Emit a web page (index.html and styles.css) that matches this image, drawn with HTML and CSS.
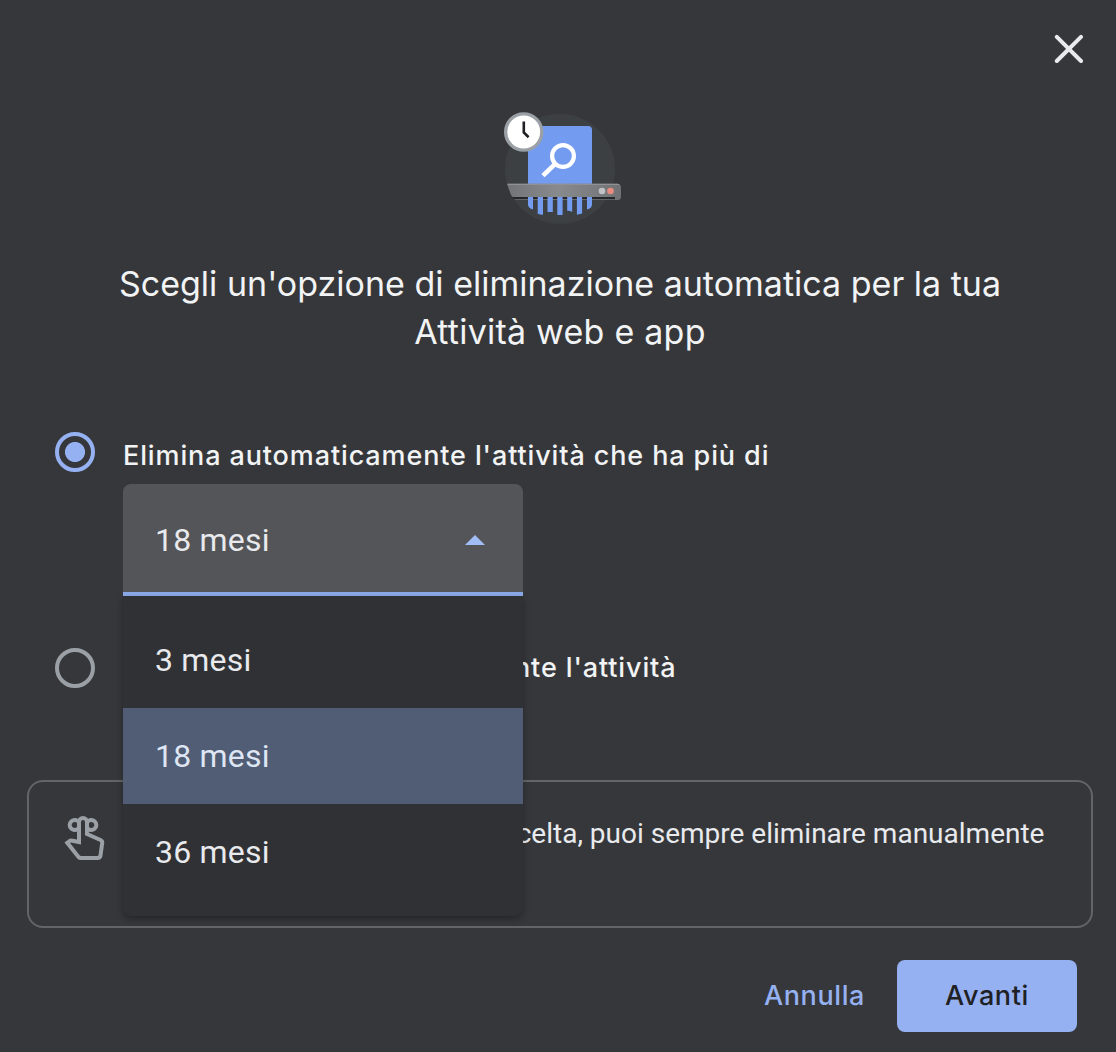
FILE: index.html
```html
<!DOCTYPE html>
<html lang="it">
<head>
<meta charset="utf-8">
<title>Eliminazione automatica</title>
<link rel="stylesheet" href="styles.css">
</head>
<body>
<main class="dialog">
  <header class="topbar">
    <button class="close" aria-label="Chiudi">
      <svg width="30" height="30" viewBox="0 0 30 30"><path d="M2.8 2.8 27 27M27 2.8 2.8 27" fill="none" stroke="#e8eaed" stroke-width="4" stroke-linecap="round"/></svg>
    </button>
  </header>

  <svg class="hero" width="120" height="114" viewBox="502 111 120 114">
    <defs>
      <linearGradient id="bar" x1="0" x2="1" y1="0" y2="0"><stop offset="0" stop-color="#727476"/><stop offset=".45" stop-color="#888b8d"/><stop offset="1" stop-color="#6f7173"/></linearGradient>
      <clipPath id="strips"><path d="M528 197h64v18h-64z"/></clipPath>
    </defs>
    <circle cx="560" cy="169" r="55" fill="#3c4043"/>
    <path d="M528 184v-58h60a4 4 0 0 1 4 4v54z" fill="#739cf0"/>
    <g fill="none" stroke="#fff" stroke-width="4.2"><circle cx="563" cy="156" r="10.9"/><path d="M555.2 163.8 543 175.7" stroke-width="4.6"/></g>
    <path d="M507 183.8h110a4 4 0 0 1 4 4v8.700a3.500 3.500 0 0 1-3.500 3.500H515l-4-5z" fill="url(#bar)"/>
    <path d="M507.500 183.800H617a4 4 0 0 1 3 1.300H508z" fill="#8f9193"/>
    <path d="M512 197h103v2.300h-101z" fill="#25272a"/>
    <g fill="#739cf0" clip-path="url(#strips)">
      <path d="M528 197h5v12.500q-5-1.500-5-5zM537.700 197h5.300v17.800q-3-.2-5.300-1zM547.500 197h5.300v15h-5.300zM557.300 197h5.300v18h-5.300zM567.200 197h5v15q-2.500-1.300-5-1.200zM576.900 197h5.200v16.500l-5.200 1.200zM587 197h5v7.500q0 4-5 5z"/>
    </g>
    <circle cx="602" cy="191" r="3.3" fill="#bfc1c5"/>
    <circle cx="610.500" cy="191" r="3.300" fill="#e98b80"/>
    <circle cx="523.700" cy="132" r="18.100" fill="#fff" stroke="#9aa0a6" stroke-width="3.300"/>
    <path d="M523.800 121.500v11l4.800 4.700" fill="none" stroke="#202124" stroke-width="2.600"/>
  </svg>

  <h1 class="title"><span class="title-a">Scegli un'opzione di eliminazione automatica per la tua</span><br><span class="title-b">Attività web e app</span></h1>

  <section class="options">
    <div class="option">
      <span class="radio radio-on"></span>
      <div class="option-body">
        <div class="label label-a">Elimina automaticamente l'attività che ha più di</div>
        <div class="select">
          <div class="field"><span>18 mesi</span><svg width="20" height="10" viewBox="0 0 20 10"><path d="M0 10 10 0l10 10z" fill="#a1bdf5"/></svg></div>
          <ul class="menu">
            <li>3 mesi</li>
            <li class="selected">18 mesi</li>
            <li>36 mesi</li>
          </ul>
        </div>
      </div>
    </div>
    <div class="option option-off">
      <span class="radio"></span>
      <div class="label label-b">Non eliminare automaticamente l'attività</div>
    </div>
  </section>

  <section class="note">
    <svg width="42" height="48" viewBox="0 0 42 48" fill="none" stroke="#9aa0a6" stroke-width="4">
      <path d="M15 28V8a4 4 0 0 1 8 0v12L36.500 26q2 1 1.700 3L36.500 41.500q-.5 2.500-3 2.500H17q-1.500 0-2.500-1L3.300 28.800 5.500 27.200q1.200-.9 3-.5z"/>
      <path d="M15 8.500a5 5 0 1 0 0 5M23 8.500a5 5 0 1 1 0 5"/>
    </svg>
    <p class="note-text">Indipendentemente dalla tua scelta, puoi sempre eliminare manualmente</p>
  </section>

  <footer class="actions">
    <button class="btn">Annulla</button>
    <button class="btn btn-primary">Avanti</button>
  </footer>
</main>
</body>
</html>
```
FILE: styles.css
```css
* { box-sizing: border-box; }
body {
  margin: 0;
  background: #36373a;
  color: #e8eaed;
  font-family: Roboto, sans-serif;
}
.dialog {
  display: flex;
  flex-direction: column;
  width: 1116px;
  height: 1052px;
  overflow: hidden;
}
.topbar {
  display: flex;
  justify-content: flex-end;
  height: 111px;
  padding: 34px 32px 0 0;
}
button { border: 0; background: none; padding: 0; font: inherit; }
.close { width: 30px; height: 30px; }
svg { display: block; flex: none; }
.hero { margin-left: 502px; }
.title {
  margin: 35px 0 0;
  padding-left: 4px;
  font: 400 34px/48px Inter, sans-serif;
  color: #f1f3f4;
  text-align: center;
  white-space: nowrap;
}
.title-a { letter-spacing: 0.010px; }
.title-b { letter-spacing: 0.23px; }
.options { padding: 76px 0 0 55px; height: 424px; }
.option { display: flex; gap: 28px; }
.option-off { margin-top: 52px; }
.radio {
  flex: none;
  width: 40px;
  height: 40px;
  border: 4px solid #9aa0a6;
  border-radius: 50%;
}
.radio-on {
  border-color: #95b1f2;
  background: radial-gradient(circle, #95b1f2 0 9.600px, transparent 10.400px);
}
.label {
  font: 500 27px/40px Inter, sans-serif;
  letter-spacing: .88px;
  color: #f1f3f4;
  white-space: nowrap;
}
.label-a { height: 52px; padding-top: 4px; }
.label-b { line-height: 40px; }
.select { position: relative; width: 400px; font-size: 32px; letter-spacing: .2px; }
.field {
  display: flex;
  align-items: center;
  justify-content: space-between;
  height: 112px;
  padding: 4px 38px 0 32px;
  background: #545558;
  border-bottom: 4px solid #8ba9e9;
  border-radius: 8px 8px 0 0;
}
.menu {
  position: absolute;
  z-index: 1;
  top: 112px;
  left: 0;
  width: 400px;
  margin: 0;
  padding: 16px 0;
  list-style: none;
  background: #303134;
  border-radius: 0 0 8px 8px;
  box-shadow: 0 3px 6px rgba(0, 0, 0, .3);
}
.menu li { height: 96px; padding-left: 32px; line-height: 96px; }
.menu .selected { background: #505d75; color: #dfe6f3; }
.note {
  display: flex;
  gap: 35px;
  height: 148px;
  margin: 0 23px 0 27px;
  padding: 32px 0 0 35px;
  border: 2px solid #636467;
  border-radius: 16px;
}
.note-text { margin: 0; font-size: 28px; line-height: 40px; white-space: nowrap; }
.actions {
  display: flex;
  justify-content: flex-end;
  margin-top: 32px;
  padding-right: 39px;
}
.btn {
  width: 165px;
  height: 72px;
  font: 500 27px/72px Inter, sans-serif;
  letter-spacing: .6px;
  color: #95b1f2;
}
.btn-primary { width: 180px; background: #95b1f2; color: #202124; border-radius: 8px; }
```
